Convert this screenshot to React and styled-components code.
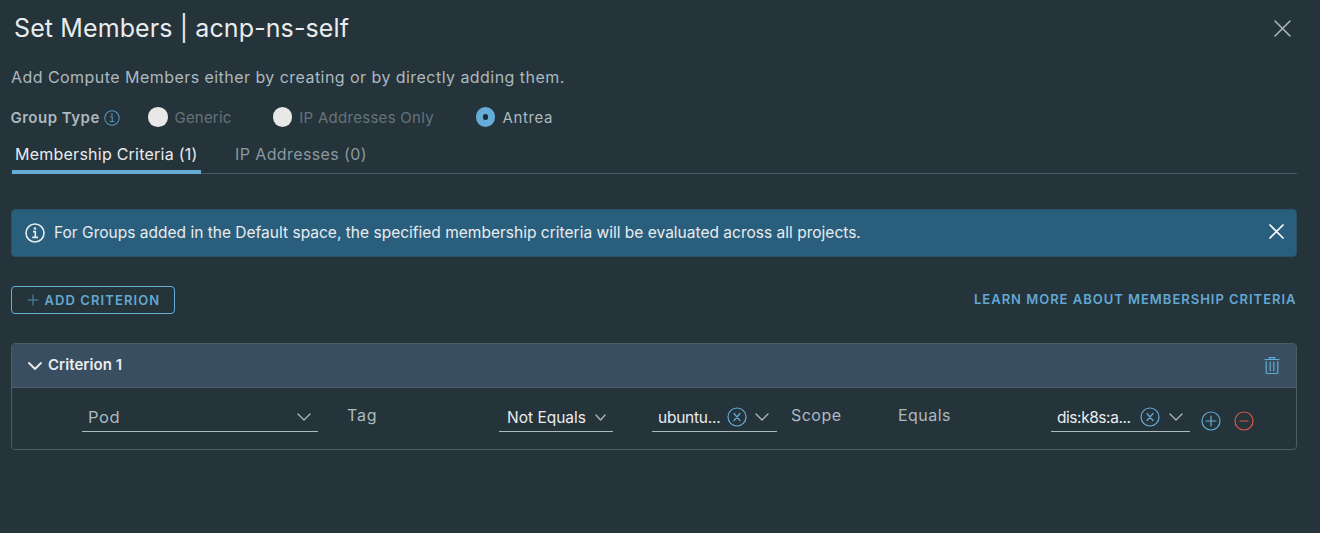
import React from "react";
import styled, { createGlobalStyle } from "styled-components";

const GlobalStyle = createGlobalStyle`
  *, *::before, *::after { box-sizing: border-box; }
  html, body { margin: 0; background: #25333a; }
  body { font-family: Inter, "Liberation Sans", sans-serif; color: #acb9bf; }
`;

const Dialog = styled.main`
  display: flex;
  flex-direction: column;
  height: 533px;
  padding: 0 23.5px 0 10.5px;
  overflow: hidden;
`;

const Text = styled.span`
  white-space: nowrap;
  letter-spacing: ${(p) => p.$track || 0}px;
`;

const Header = styled.header`
  display: flex;
  align-items: center;
  justify-content: space-between;
  height: 55px;
  padding: 0 5.5px 0 3.5px;
  svg { margin-top: 2px; }
`;

const Title = styled.h1`
  margin: 0;
  font-size: 25px;
  font-weight: 400;
  line-height: 32px;
  color: #e9ecef;
`;

const IconButton = styled.button`
  display: flex;
  padding: 0;
  border: 0;
  background: none;
  color: ${(p) => p.$color || "#acb9bf"};
`;

const Description = styled.p`
  margin: 0;
  padding-left: 0.5px;
  font-size: 16px;
  line-height: 44px;
`;

const GroupRow = styled.div`
  display: flex;
  align-items: center;
  height: 36px;
  font-size: 15px;
`;

const GroupLabel = styled.div`
  display: flex;
  align-items: center;
  gap: 4px;
  width: 137.5px;
  font-weight: 600;
  color: #acb9bf;
  svg { margin-top: 2px; color: #5596bd; }
`;

const Radio = styled.label`
  display: flex;
  align-items: center;
  gap: 7px;
  width: ${(p) => p.$width}px;
  color: ${(p) => (p.$disabled ? "#65737a" : "#acb9bf")};
`;

const Dot = styled.span`
  width: 19.5px;
  height: 19.5px;
  border-radius: 50%;
  border: ${(p) => (p.$on ? "7px solid #65acd8" : "0")};
  background: ${(p) => (p.$on ? "#1b2a32" : "#e8e8e8")};
`;

const Tabs = styled.nav`
  display: flex;
  gap: 31px;
  height: 39px;
  padding-left: 1.5px;
  border-bottom: 1px solid #495962;
`;

const Tab = styled.div`
  width: ${(p) => p.$width}px;
  height: 39px;
  padding-left: 3px;
  font-size: 16px;
  line-height: 39px;
  color: ${(p) => (p.$active ? "#e9ecef" : "#8b989f")};
  box-shadow: ${(p) => (p.$active ? "inset 0 -4px #65acd8" : "none")};
`;

const Banner = styled.section`
  display: flex;
  align-items: center;
  height: 48px;
  margin-top: 35px;
  padding: 0 12px 0 13.5px;
  border: 1px solid #2a5269;
  border-radius: 4px;
  background: #295f7d;
  color: #e9ecef;
  font-size: 15.5px;
  button { margin-bottom: 4px; }
`;

const BannerText = styled.div`
  flex: 1;
  margin: 0 0 2px 9px;
`;

const Actions = styled.div`
  display: flex;
  justify-content: space-between;
  height: 28px;
  margin-top: 29px;
`;

const AddButton = styled.button`
  display: flex;
  align-items: center;
  gap: 5.5px;
  width: 164.5px;
  padding: 0 0 0 15.5px;
  border: 1px solid #65acd8;
  border-radius: 4px;
  background: none;
  color: #62a8d2;
  font: 600 13px Inter, sans-serif;
  svg { color: #5290b4; }
`;

const LearnLink = styled.a`
  font-size: 13px;
  font-weight: 600;
  line-height: 27px;
  color: #62a8d2;
`;

const Card = styled.section`
  height: 107px;
  margin-top: 29px;
  border: 1px solid #4d5b63;
  border-radius: 4px;
`;

const CardHeader = styled.div`
  display: flex;
  align-items: center;
  height: 44px;
  padding: 0 16px 0 16.5px;
  border-bottom: 1px solid #515f69;
  border-radius: 3px 3px 0 0;
  background: #3a4e62;
  color: #e9ecef;
`;

const CardTitle = styled.h2`
  flex: 1;
  margin: 0 0 2px 6px;
  font-size: 15px;
  font-weight: 600;
`;

const Fields = styled.div`
  display: grid;
  grid-template-areas: "kind tag op . value . scope equals target actions";
  grid-template-columns: 236px 181px 114px 39px 125px 14px 107px 153px 139px auto;
  align-items: start;
  padding: 14px 0 0 70.5px;
`;

const Select = styled.div`
  grid-area: ${(p) => p.$area};
  display: flex;
  align-items: center;
  height: 30px;
  padding: 1px ${(p) => p.$right}px 0 ${(p) => p.$left || 6}px;
  border-bottom: 1px solid #acb9bf;
  font-size: ${(p) => p.$size || 15.5}px;
  color: ${(p) => (p.$muted ? "#acb9bf" : "#e9ecef")};
  ${Text} { flex: 1; }
  svg { flex: none; color: #acb9bf; }
`;

const Clear = styled.span`
  display: flex;
  margin-right: ${(p) => p.$right}px;
  svg { color: #65acd8; }
`;

const Static = styled.div`
  grid-area: ${(p) => p.$area};
  padding-left: ${(p) => p.$left || 0}px;
  font-size: 16px;
  line-height: 27px;
`;

const RowActions = styled.div`
  grid-area: actions;
  display: flex;
  gap: 13px;
  padding: 9px 0 0 10.5px;
`;

const Svg = ({ w, h = w, sw = 1.2, children }) => (
  <svg width={w} height={h} viewBox={`0 0 ${w} ${h}`} fill="none" stroke="currentColor" strokeWidth={sw} strokeLinecap="round" strokeLinejoin="round">
    {children}
  </svg>
);

const Cross = ({ size, sw }) => (
  <Svg w={size} sw={sw}><path d={`M1 1L${size - 1} ${size - 1}M${size - 1} 1L1 ${size - 1}`} /></Svg>
);

const Chevron = ({ w = 14, h = 8, sw = 1.3 }) => (
  <Svg w={w} h={h} sw={sw}><path d={`M1 1L${w / 2} ${h - 1}L${w - 1} 1`} /></Svg>
);

const Info = ({ size, sw }) => (
  <svg width={size} height={size} viewBox="0 0 20 20" fill="none" stroke="currentColor" strokeWidth={sw}>
    <circle cx="10" cy="10" r="9" />
    <path d="M8 8.6h2.3v5.6M7.2 14.4h5.8" />
    <circle cx="10" cy="5.5" r="1.2" fill="currentColor" stroke="none" />
  </svg>
);

const Circled = ({ d }) => (
  <Svg w={20} sw={1.2}><circle cx="10" cy="10" r="9" /><path d={d} /></Svg>
);

const Trash = () => (
  <Svg w={16} h={19} sw={1.2}>
    <path d="M1 3.5h14M5.5 3.2V1.6h5v1.6M2.2 5.5v11q0 1 1 1h9.6q1 0 1-1v-11M6.2 6.3v8.5M9.8 6.3v8.5" />
  </Svg>
);

export default function App() {
  return (
    <>
      <GlobalStyle />
      <Dialog>
        <Header>
          <Title><Text $track={0.11}>Set Members | acnp-ns-self</Text></Title>
          <IconButton aria-label="Close"><Cross size={17} sw={1.5} /></IconButton>
        </Header>
        <Description><Text $track={0.45}>Add Compute Members either by creating or by directly adding them.</Text></Description>
        <GroupRow>
          <GroupLabel><Text $track={0.5}>Group Type</Text><Info size={16} sw={1.3} /></GroupLabel>
          <Radio $width={124.7} $disabled><Dot /><Text $track={0.2}>Generic</Text></Radio>
          <Radio $width={203.3} $disabled><Dot /><Text $track={0.29}>IP Addresses Only</Text></Radio>
          <Radio $width={100}><Dot $on /><Text $track={0.6}>Antrea</Text></Radio>
        </GroupRow>
        <Tabs>
          <Tab $width={189} $active><Text $track={0.24}>Membership Criteria (1)</Text></Tab>
          <Tab $width={140}><Text $track={0.4}>IP Addresses (0)</Text></Tab>
        </Tabs>
        <Banner>
          <Info size={20} sw={1.6} />
          <BannerText><Text $track={0.01}>For Groups added in the Default space, the specified membership criteria will be evaluated across all projects.</Text></BannerText>
          <IconButton $color="#ffffff" aria-label="Dismiss"><Cross size={15} sw={1.7} /></IconButton>
        </Banner>
        <Actions>
          <AddButton><Svg w={12} sw={1}><path d="M6 1v10M1 6h10" /></Svg><Text $track={1.09}>ADD CRITERION</Text></AddButton>
          <LearnLink><Text $track={0.98}>LEARN MORE ABOUT MEMBERSHIP CRITERIA</Text></LearnLink>
        </Actions>
        <Card>
          <CardHeader>
            <Chevron sw={1.8} />
            <CardTitle><Text $track={0.05}>Criterion 1</Text></CardTitle>
            <IconButton $color="#65acd8" aria-label="Delete"><Trash /></IconButton>
          </CardHeader>
          <Fields>
            <Select $area="kind" $right={7} $size={16.5} $muted><Text $track={0.6}>Pod</Text><Chevron /></Select>
            <Static $area="tag" $left={29}><Text $track={0.8}>Tag</Text></Static>
            <Select $area="op" $left={8} $right={7.5}><Text>Not Equals</Text><Chevron w={11} h={7} /></Select>
            <Select $area="value" $right={8}><Text $track={-0.236}>ubuntu...</Text><Clear $right={8}><Circled d="M7 6.5l6 7M13 6.5l-6 7" /></Clear><Chevron /></Select>
            <Static $area="scope"><Text $track={0.475}>Scope</Text></Static>
            <Static $area="equals"><Text $track={0.469}>Equals</Text></Static>
            <Select $area="target" $right={7}><Text $track={-0.436}>dis:k8s:a...</Text><Clear $right={9}><Circled d="M7 6.5l6 7M13 6.5l-6 7" /></Clear><Chevron /></Select>
            <RowActions>
              <IconButton $color="#65acd8" aria-label="Add"><Circled d="M10 5v10M5 10h10" /></IconButton>
              <IconButton $color="#e0574a" aria-label="Remove"><Circled d="M6 10h8" /></IconButton>
            </RowActions>
          </Fields>
        </Card>
      </Dialog>
    </>
  );
}
